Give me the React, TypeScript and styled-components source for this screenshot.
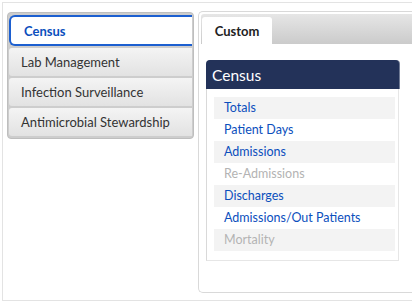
import React from "react";
import styled, { createGlobalStyle } from "styled-components";

const Global = createGlobalStyle`
  html, body { margin: 0; padding: 0; background: #ffffff; }
  body { font-family: Lato, "Open Sans", "Liberation Sans", sans-serif; width: 412px; height: 308px; overflow: hidden; }
`;

const Frame = styled.div`
  box-sizing: border-box;
  margin: 2px 0 0 2px;
  height: 299px;
  width: 430px;
  border: 1px solid #e3e3e3;
  border-right: none;
  display: flex;
  align-items: flex-start;
  padding: 8px 0 0 4px;
  gap: 4px;
`;

const Nav = styled.div`
  box-sizing: border-box;
  width: 187px;
  margin-top: 1px;
  background: #cdcdcd;
  border: 1px solid #bebebe;
  border-radius: 4px;
  padding: 2px 0 2px 1px;
  display: flex;
  flex-direction: column;
  gap: 2px;
`;

const NavItem = styled.div<{ $active?: boolean }>`
  box-sizing: border-box;
  height: ${(p) => (p.$active ? "31px" : "28px")};
  display: flex;
  align-items: center;
  font-size: 13px;
  border-radius: ${(p) => (p.$active ? "6px 0 0 6px" : "3px 0 0 3px")};
  padding-left: ${(p) => (p.$active ? "13px" : "12px")};
  color: ${(p) => (p.$active ? "#0b4fbd" : "#333333")};
  font-weight: ${(p) => (p.$active ? 700 : 400)};
  background: ${(p) =>
    p.$active ? "#ffffff" : "linear-gradient(#f4f4f4, #e2e2e2)"};
  border: ${(p) => (p.$active ? "2px solid #1c5fd0" : "none")};
  border-right: none;
  margin-right: 1px;
`;

const Panel = styled.div`
  box-sizing: border-box;
  flex: 1;
  height: 282px;
  border: 1px solid #d9d9d9;
  border-right: none;
  border-radius: 5px 0 0 5px;
  padding: 2px 0 0 2px;
  display: flex;
  flex-direction: column;
`;

const TabBar = styled.div`
  height: 30px;
  box-sizing: border-box;
  background: linear-gradient(#e6e6e6, #cbcbcb);
  border-radius: 3px 0 0 0;
  padding: 3px 0 0 1px;
  display: flex;
`;

const Tab = styled.div`
  width: 70px;
  height: 27px;
  box-sizing: border-box;
  background: #ffffff;
  border-radius: 3px 3px 0 0;
  font-size: 13px;
  font-weight: 700;
  color: #222222;
  display: flex;
  align-items: center;
  justify-content: center;
`;

const Content = styled.div`
  padding: 16px 0 0 5px;
`;

const Widget = styled.div`
  width: 193px;
`;

const WidgetHeader = styled.div`
  height: 29px;
  box-sizing: border-box;
  background: #233259;
  border-radius: 4px 4px 0 0;
  color: #ffffff;
  font-size: 15.5px;
  display: flex;
  align-items: center;
  padding-left: 6px;
  box-shadow: 1px 0 0 #6f7a94;
`;

const List = styled.div`
  box-sizing: border-box;
  border: 1px solid #e6e6e6;
  border-left-color: #d9d9d9;
  border-top: none;
  padding: 8px 3px 9px 7px;
`;

const Row = styled.div<{ $shade?: boolean; $disabled?: boolean }>`
  height: 22px;
  line-height: 22px;
  font-size: 12.5px;
  padding-left: 10px;
  background: ${(p) => (p.$shade ? "#f3f3f3" : "transparent")};
  color: ${(p) => (p.$disabled ? "#b3b3b3" : "#0b4fbd")};
`;

const rows: { label: string; disabled?: boolean }[] = [
  { label: "Totals" },
  { label: "Patient Days" },
  { label: "Admissions" },
  { label: "Re-Admissions", disabled: true },
  { label: "Discharges" },
  { label: "Admissions/Out Patients" },
  { label: "Mortality", disabled: true },
];

export default function App() {
  return (
    <>
      <Global />
      <Frame>
        <Nav>
          <NavItem $active>Census</NavItem>
          <NavItem>Lab Management</NavItem>
          <NavItem>Infection Surveillance</NavItem>
          <NavItem>Antimicrobial Stewardship</NavItem>
        </Nav>
        <Panel>
          <TabBar>
            <Tab>Custom</Tab>
          </TabBar>
          <Content>
            <Widget>
              <WidgetHeader>Census</WidgetHeader>
              <List>
                {rows.map((r, i) => (
                  <Row key={r.label} $shade={i % 2 === 0} $disabled={r.disabled}>
                    {r.label}
                  </Row>
                ))}
              </List>
            </Widget>
          </Content>
        </Panel>
      </Frame>
    </>
  );
}
